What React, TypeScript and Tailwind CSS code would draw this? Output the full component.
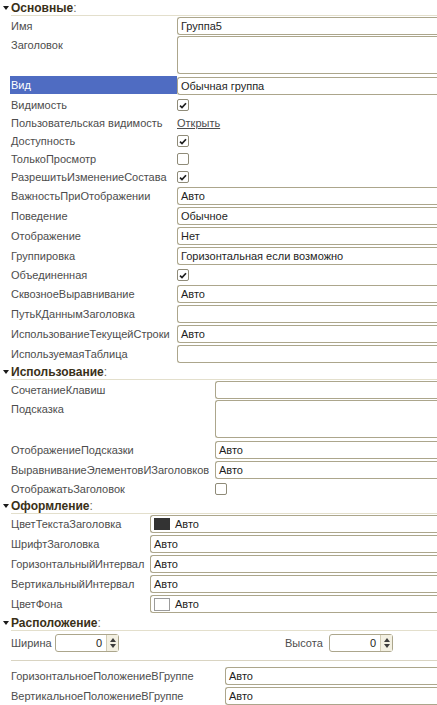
import React from "react";

type Row =
  | { kind: "field"; label: string; value?: string; tall?: boolean; selected?: boolean; swatch?: "dark" | "light" }
  | { kind: "check"; label: string; checked: boolean }
  | { kind: "link"; label: string; value: string };

const basic: Row[] = [
  { kind: "field", label: "Имя", value: "Группа5" },
  { kind: "field", label: "Заголовок", tall: true },
  { kind: "field", label: "Вид", value: "Обычная группа", selected: true },
  { kind: "check", label: "Видимость", checked: true },
  { kind: "link", label: "Пользовательская видимость", value: "Открыть" },
  { kind: "check", label: "Доступность", checked: true },
  { kind: "check", label: "ТолькоПросмотр", checked: false },
  { kind: "check", label: "РазрешитьИзменениеСостава", checked: true },
  { kind: "field", label: "ВажностьПриОтображении", value: "Авто" },
  { kind: "field", label: "Поведение", value: "Обычное" },
  { kind: "field", label: "Отображение", value: "Нет" },
  { kind: "field", label: "Группировка", value: "Горизонтальная если возможно" },
  { kind: "check", label: "Объединенная", checked: true },
  { kind: "field", label: "СквозноеВыравнивание", value: "Авто" },
  { kind: "field", label: "ПутьКДаннымЗаголовка" },
  { kind: "field", label: "ИспользованиеТекущейСтроки", value: "Авто" },
  { kind: "field", label: "ИспользуемаяТаблица" },
];

const usage: Row[] = [
  { kind: "field", label: "СочетаниеКлавиш" },
  { kind: "field", label: "Подсказка", tall: true },
  { kind: "field", label: "ОтображениеПодсказки", value: "Авто" },
  { kind: "field", label: "ВыравниваниеЭлементовИЗаголовков", value: "Авто" },
  { kind: "check", label: "ОтображатьЗаголовок", checked: false },
];

const look: Row[] = [
  { kind: "field", label: "ЦветТекстаЗаголовка", value: "Авто", swatch: "dark" },
  { kind: "field", label: "ШрифтЗаголовка", value: "Авто" },
  { kind: "field", label: "ГоризонтальныйИнтервал", value: "Авто" },
  { kind: "field", label: "ВертикальныйИнтервал", value: "Авто" },
  { kind: "field", label: "ЦветФона", value: "Авто", swatch: "light" },
];

const placement: Row[] = [
  { kind: "field", label: "ГоризонтальноеПоложениеВГруппе", value: "Авто" },
  { kind: "field", label: "ВертикальноеПоложениеВГруппе", value: "Авто" },
];

function Header({ title }: { title: string }) {
  return (
    <div className="flex h-4 items-center">
      <svg width="11" height="16" viewBox="0 0 11 16" className="shrink-0">
        <polygon points="3,6 9,6 6,10" fill="#1a1a1a" />
      </svg>
      <div className="flex h-4 flex-1 items-center border-b border-[#e3dfcc] text-[12px] font-bold leading-none text-[#3a3018]">
        {title}
        <span className="font-normal text-[#6e6a5c]">:</span>
      </div>
    </div>
  );
}

function Check({ checked }: { checked: boolean }) {
  return (
    <div className="flex h-[12px] w-[12px] items-center justify-center rounded-[2px] border border-[#8f8b78] bg-white">
      {checked && (
        <svg width="8" height="7" viewBox="0 0 8 7">
          <path d="M1 3.6 L3 5.6 L7 1.2" fill="none" stroke="#1f1f1f" strokeWidth="1.7" />
        </svg>
      )}
    </div>
  );
}

// fields run past the panel's right edge, as in the designer
function Field({ row }: { row: Extract<Row, { kind: "field" }> }) {
  return (
    <div
      className={`flex flex-1 rounded-l-[3px] border-y border-l border-[#aca68c] bg-white pl-[3px] text-[11px] text-[#1e1e1e] ${
        row.tall ? "h-[38px] items-start" : "h-[18px] items-center"
      }`}
    >
      {row.swatch === "dark" && <span className="mr-[5px] h-[12px] w-[16px] bg-[#333333]" />}
      {row.swatch === "light" && <span className="mr-[5px] h-[13px] w-[16px] border border-[#9b9b9b] bg-white" />}
      {row.value}
    </div>
  );
}

function Section({ rows, labelW }: { rows: Row[]; labelW: string }) {
  return (
    <div>
      {rows.map((r) => {
        const h = r.kind === "field" ? (r.tall ? "h-10" : "h-5") : "h-[18px]";
        const sel = r.kind === "field" && r.selected;
        return (
          <div key={r.label} className={`flex ${h} ${r.kind === "field" && r.tall ? "items-start" : "items-center"}`}>
            <div className="w-[10px] shrink-0" />
            <div
              className={`${labelW} flex shrink-0 self-stretch pl-px text-[11px] ${
                sel ? "mb-[2px] bg-[#4f6cc2] text-white" : "text-[#4d4d4d]"
              } ${r.kind === "field" && r.tall ? "items-start pt-[4px]" : "items-center"}`}
            >
              {r.label}
            </div>
            {r.kind === "field" && <Field row={r} />}
            {r.kind === "check" && <Check checked={r.checked} />}
            {r.kind === "link" && <span className="text-[11px] text-[#4d4d4d] underline">{r.value}</span>}
          </div>
        );
      })}
    </div>
  );
}

function Spin({ value }: { value: string }) {
  return (
    <div className="flex h-[18px] w-[64px] items-center rounded-[3px] border border-[#aca68c] bg-white text-[11px] text-[#1e1e1e]">
      <span className="flex-1 pr-[4px] text-right">{value}</span>
      <div className="flex h-full w-[12px] flex-col items-center justify-center gap-[2px] border-l border-[#d2ccb4] bg-[#f3f0e2]">
        <svg width="6" height="4" viewBox="0 0 6 4">
          <polygon points="0,4 6,4 3,0" fill="#3c3c3c" />
        </svg>
        <svg width="6" height="4" viewBox="0 0 6 4">
          <polygon points="0,0 6,0 3,4" fill="#3c3c3c" />
        </svg>
      </div>
    </div>
  );
}

export default function App() {
  return (
    <div className="h-[705px] w-[437px] overflow-hidden bg-white font-['Liberation_Sans',Arial,sans-serif] leading-none">
      <Header title="Основные" />
      <Section rows={basic} labelW="w-[167px]" />
      <Header title="Использование" />
      <Section rows={usage} labelW="w-[205px]" />
      <Header title="Оформление" />
      <Section rows={look} labelW="w-[140px]" />
      <div className="h-px" />
      <Header title="Расположение" />
      <div className="flex h-6 items-center pl-[11px] text-[11px] text-[#4d4d4d]">
        <span className="w-[44px]">Ширина</span>
        <Spin value="0" />
        <span className="ml-[166px] w-[44px]">Высота</span>
        <Spin value="0" />
      </div>
      <div className="ml-[11px] mt-[5px] mb-[5px] border-t border-[#d9d4c2]" />
      <Section rows={placement} labelW="w-[215px]" />
    </div>
  );
}
